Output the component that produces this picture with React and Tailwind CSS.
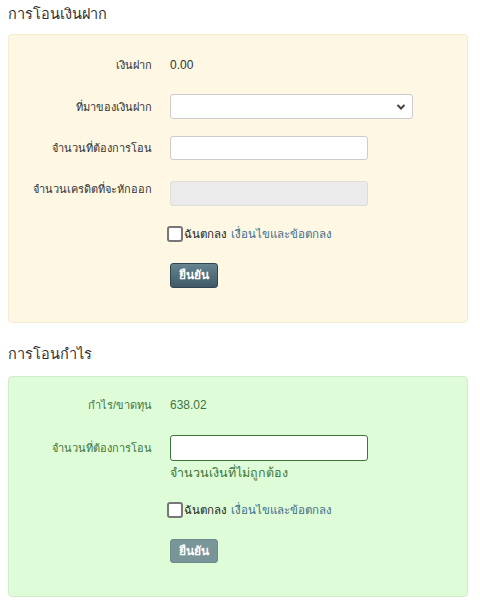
import React from 'react';

const font = { fontFamily: '"Liberation Sans", "Noto Sans", Tahoma, sans-serif' };

const Label = ({ children, green, className = '' }) => (
  <div
    className={`w-[143px] shrink-0 text-right text-[11px] leading-[24px] ${
      green ? 'text-[#3c763d]' : 'text-[#333]'
    } ${className}`}
  >
    {children}
  </div>
);

const Agree = () => (
  <div className="flex items-center pl-[158px] text-[11.5px] leading-[18px]">
    <span className="w-[16px] h-[16px] rounded-[3px] border-2 border-[#777] bg-white shrink-0" />
    <span className="ml-[1px] text-[#222]">ฉันตกลง</span>
    <span className="ml-[4px] text-[#3e6e8c]">เงื่อนไขและข้อตกลง</span>
  </div>
);

export default function App() {
  return (
    <div className="w-[480px] bg-white px-[8px] pt-[3px] pb-[10px]" style={font}>
      {/* Deposit transfer */}
      <h2 className="text-[14.5px] leading-[22px] text-[#333]">การโอนเงินฝาก</h2>
      <div className="mt-[9px] w-[460px] h-[289px] rounded-[4px] border border-[#f3ecd3] bg-[#fdf7e4] pt-[18px]">
        <div className="flex items-center gap-[18px]">
          <Label>เงินฝาก</Label>
          <span className="text-[12px] text-[#333]">0.00</span>
        </div>
        <div className="mt-[17px] flex items-center gap-[18px]">
          <Label>ที่มาของเงินฝาก</Label>
          <div className="relative w-[243px] h-[25px] rounded-[3px] border border-[#ccc] bg-white">
            <svg className="absolute right-[6px] top-[8px]" width="10" height="8" viewBox="0 0 10 8">
              <path d="M1.5 2 L5 5.5 L8.5 2" fill="none" stroke="#444" strokeWidth="2" />
            </svg>
          </div>
        </div>
        <div className="mt-[17px] flex items-center gap-[18px]">
          <Label>จำนวนที่ต้องการโอน</Label>
          <div className="w-[198px] h-[24px] rounded-[3px] border border-[#ccc] bg-white" />
        </div>
        <div className="mt-[21px] flex items-start gap-[18px]">
          <Label className="mt-[-4px]">จำนวนเครดิตที่จะหักออก</Label>
          <div className="w-[198px] h-[25px] rounded-[3px] border border-[#ddd] bg-[#ebebeb]" />
        </div>
        <div className="mt-[19px]">
          <Agree />
        </div>
        <div className="mt-[19px] pl-[161px]">
          <button className="w-[48px] h-[25px] rounded-[3px] border border-[#2f4650] bg-gradient-to-b from-[#668590] to-[#3f5a66] text-[12px] font-bold text-white">
            ยืนยัน
          </button>
        </div>
      </div>

      {/* Profit transfer */}
      <h2 className="mt-[20px] text-[14.5px] leading-[22px] text-[#333]">การโอนกำไร</h2>
      <div className="mt-[11px] w-[460px] h-[221px] rounded-[4px] border border-[#d3ebcc] bg-[#dffcd8] pt-[16px]">
        <div className="flex items-center gap-[18px]">
          <Label green>กำไร/ขาดทุน</Label>
          <span className="text-[12px] text-[#3c763d]">638.02</span>
        </div>
        <div className="mt-[18px] flex items-center gap-[18px]">
          <Label green>จำนวนที่ต้องการโอน</Label>
          <div className="w-[198px] h-[26px] rounded-[3px] border border-[#3c763d] bg-white" />
        </div>
        <div className="mt-[3px] pl-[161px] text-[12.5px] leading-[18px] text-[#3c763d]">
          จำนวนเงินที่ไม่ถูกต้อง
        </div>
        <div className="mt-[19px]">
          <Agree />
        </div>
        <div className="mt-[19px] pl-[161px]">
          <button className="w-[48px] h-[24px] rounded-[3px] border border-[#6a8a90] bg-[#7a9597] text-[12px] font-bold text-white">
            ยืนยัน
          </button>
        </div>
      </div>
    </div>
  );
}
